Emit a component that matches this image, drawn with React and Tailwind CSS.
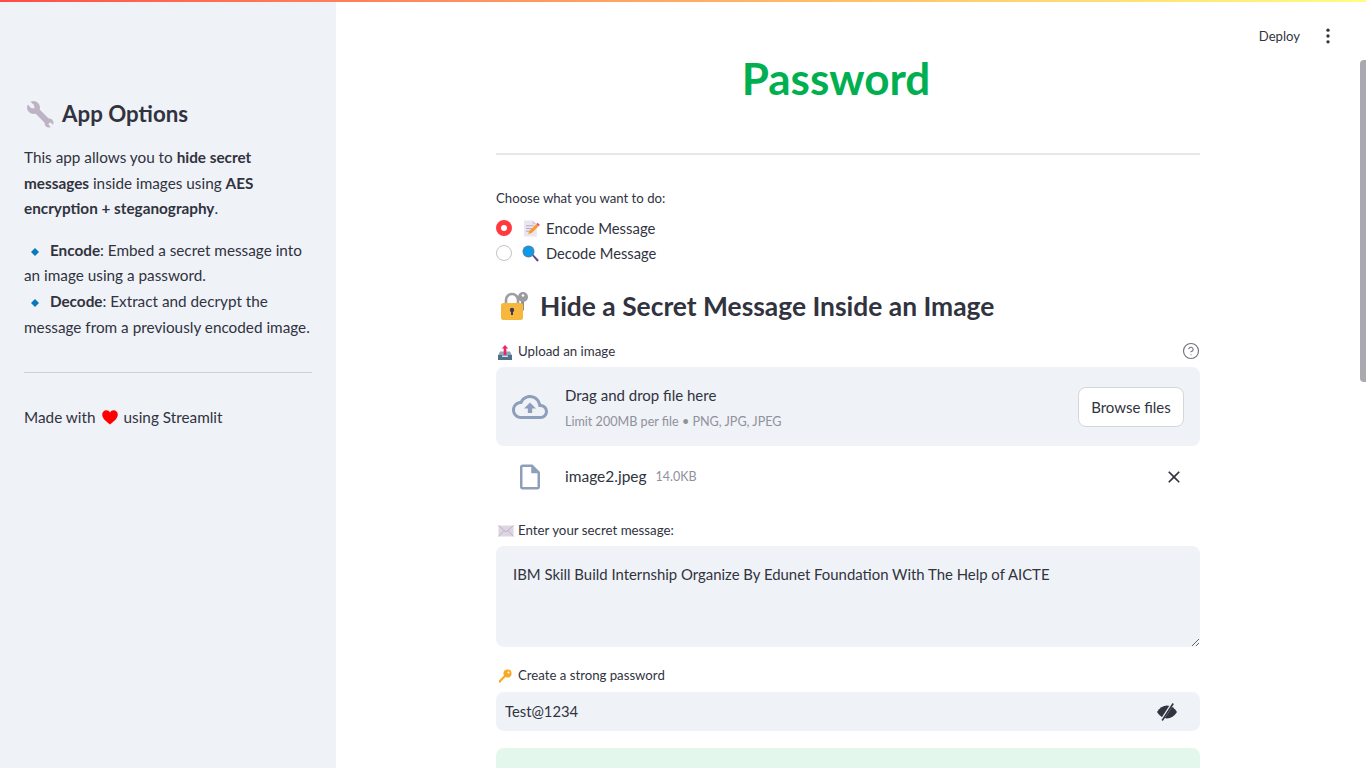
import React from 'react';
import { CircleHelp } from 'lucide-react';

const Wrench = () => (
  <svg width="28" height="28" viewBox="0 0 28 28" className="shrink-0">
    <path d="M8 8l15 15" stroke="#bdb3c4" strokeWidth="6" />
    <circle cx="7.500" cy="7.500" r="6.500" fill="#bdb3c4" />
    <path d="M0 2.500L2.500 0 8 5l.5 3.500L5 8z" fill="#eff2f7" />
    <circle cx="23" cy="23" r="4.500" fill="#bdb3c4" />
    <path d="M28 25.500L25.500 28l-3-3.500.5-1.500 1.500-.5z" fill="#eff2f7" />
  </svg>
);

const Memo = () => (
  <svg width="16" height="17" viewBox="1 1 15 15" className="shrink-0">
    <path d="M1 1h8l4 3.500V16H1z" fill="#ece4f0" />
    <path d="M9 1l4 3.500H9z" fill="#d5cbdc" />
    <path d="M3 6h7M3 8.500h5M3 11h3" stroke="#b4aabd" strokeWidth="1" />
    <path d="M5 14l1-3.500L12.800 4.200l2 2-6.300 6.300z" fill="#f59a2f" />
    <path d="M12.800 4.200l1-1 2 2-1 1z" fill="#ef2f7f" />
  </svg>
);

const Magnifier = () => (
  <svg width="17" height="17" viewBox="0 0 17 17" className="shrink-0">
    <path d="M10 10.500l1.200-1.200 5 5.200c.5.600.5 1.200 0 1.700s-1.100.4-1.600-.1z" fill="#5c4a8c" />
    <circle cx="6.500" cy="6.500" r="6" fill="#5c7f9c" />
    <circle cx="6.500" cy="6.500" r="5" fill="#0a9bea" />
  </svg>
);

const LockKey = () => (
  <svg width="28" height="30" viewBox="0 0 28 30" className="shrink-0">
    <path d="M6 14V9a6 6 0 0 1 12 0v5" fill="none" stroke="#9d9da3" strokeWidth="2.600" />
    <path d="M21 8.500h3v11h-3z" fill="#8f8f96" />
    <circle cx="23" cy="6" r="5" fill="#9a9aa1" />
    <circle cx="23" cy="4.500" r="1.300" fill="#fff" />
    <rect x="1" y="12" width="22" height="17" rx="2.500" fill="#f6b73c" />
    <circle cx="12" cy="19" r="2.200" fill="#3f3a4e" />
    <path d="M11 19h2v5h-2z" fill="#3f3a4e" />
  </svg>
);

const Inbox = () => (
  <svg width="14" height="15" viewBox="0 0 14 15" className="shrink-0">
    <path d="M2 6.500h10l2 4H0z" fill="#8fa6b8" />
    <path d="M0 10h14v5H0z" fill="#4f7088" />
    <path d="M4 10.500h6V12H4z" fill="#d5dde3" />
    <path d="M7 0l3.200 3.500H8.300V10H5.700V3.500H3.800z" fill="#f0246b" />
  </svg>
);

const Envelope = () => (
  <svg width="16" height="12" viewBox="0 0 16 12" className="shrink-0">
    <rect x="0.500" y="0.500" width="15" height="11" fill="#ded5e3" />
    <path d="M.5.500L8 7l7.500-6.500M.5 11.500L6 5.500M15.500 11.500L10 5.500" fill="none" stroke="#b5a9bf" strokeWidth="0.800" />
  </svg>
);

const KeyIcon = () => (
  <svg width="14" height="14" viewBox="0 0 14 14" className="shrink-0">
    <circle cx="9.500" cy="4.500" r="4" fill="#f9a825" />
    <circle cx="10.500" cy="3.500" r="1" fill="#fff" />
    <path d="M6.800 5.700l1.500 1.500L3 12.500v1H1v-2z" fill="#f9a825" />
  </svg>
);

const Diamond = () => (
  <svg width="10" height="10" viewBox="0 0 10 10" className="inline-block shrink-0">
    <path d="M5 1l4 4-4 4-4-4z" fill="#0a78bd" />
  </svg>
);

const Heart = () => (
  <svg width="16" height="15" viewBox="0 0 16 15" className="inline-block">
    <path d="M8 14.500C5 12 .2 9 .2 4.600.2 2 2.200.3 4.300.3 5.900.3 7.200 1.100 8 2.500 8.800 1.100 10.100.3 11.700.3c2.100 0 4.100 1.700 4.100 4.300C15.800 9 11 12 8 14.500z" fill="#f00" />
  </svg>
);

const App = () => {
  return (
    <div className="relative flex h-screen overflow-hidden bg-white text-[#31333f] font-['Lato','Liberation_Sans',sans-serif]">
      <div className="absolute inset-x-0 top-0 h-[2px] bg-gradient-to-r from-[#ff4b4b] to-[#fffd80]" />

      {/* sidebar */}
      <aside className="w-[336px] shrink-0 bg-[#eff2f7] px-6 pt-[98px]">
        <h2 className="flex h-8 items-center gap-[8px] pl-[2px] text-[22.300px] leading-8 font-bold">
          <Wrench /> App Options
        </h2>
        <p className="mt-[15px] text-[15.300px] leading-[25.6px]">
          This app allows you to <b className="font-bold">hide secret messages</b> inside images using{' '}
          <b className="font-bold">AES encryption + steganography</b>.
        </p>
        <p className="mt-4 text-[15.300px] leading-[25.6px]">
          <span className="mx-[6px]"><Diamond /></span> <b className="font-bold">Encode</b>: Embed a secret message into an image using a password.
          <br />
          <span className="mx-[6px]"><Diamond /></span> <b className="font-bold">Decode</b>: Extract and decrypt the message from a previously encoded image.
        </p>
        <hr className="mt-[32px] border-t border-[#cfd0d6]" />
        <p className="mt-[32px] flex items-center gap-[6px] text-[15.300px] leading-[25.6px]">
          Made with <Heart /> using Streamlit
        </p>
      </aside>

      {/* main column */}
      <main className="flex-1 pl-[160px]">
        <div className="w-[704px]">
          <h1 className="pt-[52px] pr-6 text-center text-[44px] leading-[52px] font-bold text-[#00b050]">Password</h1>
          <hr className="mt-[49px] border-t-2 border-[#e6e7ea]" />

          <p className="mt-[33px] text-[13.2px] leading-5">Choose what you want to do:</p>
          <div className="mt-[8px] flex h-[24px] items-center text-[14.9px]">
            <span className="flex h-4 w-4 items-center justify-center rounded-full bg-[#ff3b3f]">
              <span className="h-[6px] w-[6px] rounded-full bg-white" />
            </span>
            <span className="ml-[12px] mr-[6px]"><Memo /></span>
            Encode Message
          </div>
          <div className="mt-[1px] flex h-[24px] items-center text-[14.7px]">
            <span className="h-4 w-4 rounded-full border border-[#c3c4c9] bg-white" />
            <span className="ml-[10px] mr-[7px]"><Magnifier /></span>
            Decode Message
          </div>

          <h3 className="mt-[21px] flex h-[40px] items-center gap-[12px] pl-[4px] text-[26.400px] leading-10 font-bold">
            <LockKey /> Hide a Secret Message Inside an Image
          </h3>

          <div className="mt-[15px] flex h-5 items-center justify-between text-[13.3px]">
            <span className="flex items-center gap-[6px] pt-[2px] pl-[2px]"><Inbox /> Upload an image</span>
            <CircleHelp size={18} strokeWidth={1.500} className="text-[#6f717c]" />
          </div>
          <div className="mt-[6px] flex h-[79px] items-center rounded-lg bg-[#eff2f7] pr-4 pl-4">
            <svg width="36" height="36" viewBox="0 0 24 24" fill="#8f9fbb" className="shrink-0">
              <path d="M19.350 10.040C18.670 6.590 15.640 4 12 4 9.110 4 6.600 5.640 5.350 8.040 2.340 8.360 0 10.910 0 14c0 3.310 2.690 6 6 6h13c2.760 0 5-2.240 5-5 0-2.640-2.050-4.780-4.650-4.960zM19 18H6c-2.210 0-4-1.790-4-4 0-2.050 1.530-3.760 3.560-3.970l1.070-.11.5-.95C8.080 7.140 9.940 6 12 6c2.620 0 4.880 1.860 5.390 4.430l.3 1.500 1.530.11c1.560.1 2.780 1.410 2.780 2.960 0 1.650-1.350 3-3 3zM8 13h2.550v3h2.900v-3H16l-4-4z" />
            </svg>
            <div className="ml-[17px] flex-1 pt-[2px]">
              <div className="text-[15px] leading-6">Drag and drop file here</div>
              <div className="mt-[5px] text-[12.6px] leading-5 text-[#8f919b]">Limit 200MB per file • PNG, JPG, JPEG</div>
            </div>
            <button className="h-10 w-[106px] rounded-lg border border-[#d6d6d9] bg-white text-[15px] leading-6">Browse files</button>
          </div>

          <div className="mt-[11px] flex h-[40px] items-center">
            <svg width="30" height="30" viewBox="0 0 24 24" fill="#8f9fbb" className="ml-[19px] shrink-0">
              <path d="M14 2H6c-1.100 0-1.990.9-1.990 2L4 20c0 1.100.89 2 1.990 2H18c1.100 0 2-.9 2-2V8l-6-6zM6 20V4h7v5h5v11H6z" />
            </svg>
            <span className="ml-[20px] text-[15.500px]">image2.jpeg</span>
            <span className="ml-[9px] text-[12.5px] text-[#8f919b]">14.0KB</span>
            <svg width="20" height="20" viewBox="0 0 24 24" fill="#31333f" className="mr-[16px] ml-auto shrink-0">
              <path d="M19 6.410L17.590 5 12 10.590 6.410 5 5 6.410 10.590 12 5 17.590 6.410 19 12 13.410 17.590 19 19 17.590 13.410 12z" />
            </svg>
          </div>

          <div className="mt-[23px] flex h-5 items-center gap-[4px] pt-[2px] pl-[2px] text-[13.3px]"><Envelope /> Enter your secret message:</div>
          <textarea
            readOnly
            defaultValue="IBM Skill Build Internship Organize By Edunet Foundation With The Help of AICTE"
            className="mt-[6px] block h-[101px] w-full rounded-lg bg-[#eff2f7] px-[17px] py-[16px] text-[14.9px] leading-[24px] outline-none"
          />

          <div className="mt-[18px] flex h-5 items-center gap-[6px] pt-[2px] pl-[2px] text-[13.2px]"><KeyIcon /> Create a strong password</div>
          <div className="mt-[7px] flex h-[39px] items-center rounded-lg bg-[#eff2f7] pr-[22px] pl-[9px]">
            <input readOnly type="text" value="Test@1234" className="min-w-0 flex-1 bg-transparent text-[14.8px] outline-none" />
            <svg width="22" height="22" viewBox="0 0 22 22" className="shrink-0">
              <path d="M1 11c2.500-4.300 6-6.500 10-6.500S18.500 6.700 21 11c-2.500 4.300-6 6.500-10 6.500S3.500 15.300 1 11z" fill="#31333f" />
              <path d="M16.500 2.500L5.500 19.500" stroke="#eff2f7" strokeWidth="3" />
              <path d="M17.200 2.500L6.200 19.500" stroke="#31333f" strokeWidth="1.600" />
            </svg>
          </div>

          <div className="mt-[17px] h-[60px] rounded-lg bg-[#e4f7ed]" />
        </div>
      </main>

      {/* header actions and scrollbar sit over the page */}
      <div className="absolute top-[26px] right-[28px] flex items-center gap-[18px]">
        <span className="text-[13.1px] leading-5">Deploy</span>
        <svg width="20" height="20" viewBox="0 0 24 24" fill="#31333f">
          <circle cx="12" cy="5" r="2" />
          <circle cx="12" cy="12" r="2" />
          <circle cx="12" cy="19" r="2" />
        </svg>
      </div>
      <div className="absolute top-[60px] right-0 h-[322px] w-[6px] rounded-l-sm bg-[#a9a9af]" />
    </div>
  );
};

export default App;
